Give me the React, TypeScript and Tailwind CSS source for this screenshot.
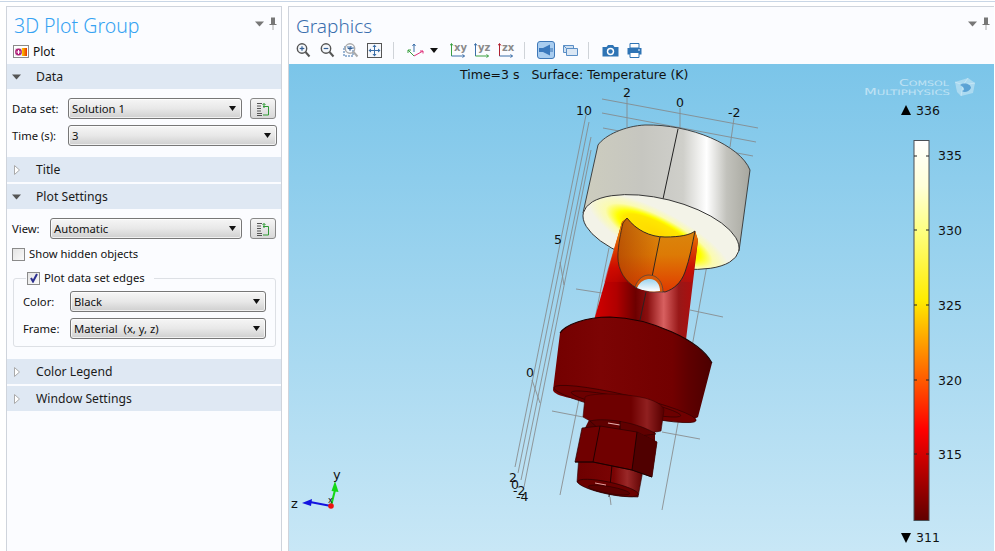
import React from "react";

const font = { fontFamily: '"Noto Sans", "Liberation Sans", sans-serif' };

function Caret({ open }: { open: boolean }) {
  return open ? (
    <svg width="9" height="6" viewBox="0 0 9 6" className="block"><path d="M0 0.5H9L4.5 5.5Z" fill="#555" /></svg>
  ) : (
    <svg width="6" height="10" viewBox="0 0 6 10" className="block"><path d="M0.5 0.5V9.5L5.5 5Z" fill="#fff" stroke="#aaa" /></svg>
  );
}

function Section({ title, open }: { title: string; open: boolean }) {
  return (
    <div className="flex h-[25px] shrink-0 items-center bg-[#dfe8f3] text-[12.2px] text-[#1a1a1a]">
      <div className="flex w-[19px] justify-center">
        <Caret open={open} />
      </div>
      <span className="ml-[10px]">{title}</span>
    </div>
  );
}

function Select({ value, className }: { value: string; className: string }) {
  return (
    <div
      className={`flex h-[21px] items-center justify-between rounded-[3px] border border-[#777] bg-gradient-to-b from-[#f6f6f6] via-[#e8e8e8] to-[#cfcfcf] pl-[3px] pr-[5px] text-[#111] shadow-[inset_0_0_0_1px_rgba(255,255,255,0.7)] whitespace-pre ${className}`}
    >
      <span>{value}</span>
      <svg width="7" height="5" viewBox="0 0 7 5"><path d="M0 0H7L3.5 5Z" fill="#111" /></svg>
    </div>
  );
}

function ListButton() {
  return (
    <div className="flex h-[21px] w-[26px] items-center justify-center rounded-[3px] border border-[#888] bg-gradient-to-b from-[#f6f6f6] to-[#d8d8d8]">
      <svg width="14" height="14" viewBox="0 0 14 14" fill="none">
        <path d="M1 1.5H6M1 4H5M1 6.5H5M1 9H5M1 11.5H6M1 13.5H6" stroke="#555" />
        <path d="M7 4.5H12.5V13H7" stroke="#2f9a35" />
        <path d="M8 6V1.5M6.5 3L8 1.5L9.5 3" stroke="#2f9a35" />
      </svg>
    </div>
  );
}

function Pin() {
  return (
    <div className="mt-[10px] flex items-center gap-[5px]">
      <svg width="9" height="6" viewBox="0 0 9 6"><path d="M0 0.5H9L4.5 5.5Z" fill="#777" /></svg>
      <svg width="8" height="13" viewBox="0 0 8 13">
        <path d="M2 0.5H6V7H7.5V8H0.5V7H2Z" fill="#777" />
        <path d="M4 8V13" stroke="#aaa" />
      </svg>
    </div>
  );
}

function Checkbox({ checked }: { checked: boolean }) {
  return (
    <div className="flex h-[13px] w-[13px] items-center justify-center border border-[#8a8a8a] bg-gradient-to-br from-[#e4e4e4] to-[#fafafa]">
      {checked && (
        <svg width="10" height="10" viewBox="0 0 10 10"><path d="M2 5L4 8.5L8 1" stroke="#2b2f8f" strokeWidth="2" fill="none" /></svg>
      )}
    </div>
  );
}

function Mag({ kind }: { kind: "in" | "out" | "box" }) {
  return (
    <svg width="16" height="16" viewBox="0 0 16 16" fill="none">
      {kind === "box" && <rect x="1" y="5" width="9" height="9" stroke="#3a6ea8" strokeDasharray="2 1" />}
      <circle cx="7" cy="6.5" r="4.7" stroke={kind === "box" ? "#aaa" : "#555"} strokeWidth="1.4" fill={kind === "box" ? "none" : "#f4f7fb"} />
      <path d="M10.5 10L14.5 14.5" stroke={kind === "box" ? "#aaa" : "#555"} strokeWidth="2" />
      <path d="M4.7 6.5H9.3" stroke="#345f95" strokeWidth="1.2" />
      {kind !== "out" && <path d="M7 4.2V8.8" stroke="#345f95" strokeWidth="1.2" />}
    </svg>
  );
}

function Extents() {
  return (
    <svg width="15" height="15" viewBox="0 0 15 15" fill="none">
      <rect x="0.5" y="0.5" width="14" height="14" stroke="#555" fill="#f6f8fc" />
      <path d="M7.5 3V12M3 7.5H12" stroke="#3a6ea8" />
      <path d="M7.5 1.5L5.5 4H9.5ZM7.5 13.5L5.5 11H9.5ZM1.5 7.5L4 5.5V9.5ZM13.5 7.5L11 5.5V9.5Z" fill="#3a6ea8" />
    </svg>
  );
}

function Triad() {
  return (
    <svg width="17" height="15" viewBox="0 0 17 15" fill="none">
      <path d="M7 9V1M5.5 3L7 1L8.5 3" stroke="#3a6ea8" />
      <path d="M7 13L1 7M1 10V7H4" stroke="#3aa040" />
      <path d="M7 13L16 8M13 8H16V10.5" stroke="#e0307a" />
    </svg>
  );
}

function PlaneIcon({ a, v, h }: { a: string; v: string; h: string }) {
  return (
    <span className="relative block h-[15px] w-[16px]">
      <svg width="16" height="15" viewBox="0 0 16 15" fill="none" className="absolute left-0 top-0">
        <path d="M1.5 13V1" stroke={v} />
        <path d="M0 2.5L1.5 0.5L3 2.5" stroke={v} />
        <path d="M1.5 13H14.5" stroke={h} />
        <path d="M12.5 11.5L14.5 13L12.5 14.5" stroke={h} />
      </svg>
      <span className="absolute left-[4px] top-[-2px] text-[10px] font-bold leading-[13px] text-[#8a8a8a]" style={{ fontFamily: '"DejaVu Sans", sans-serif' }}>
        {a}
      </span>
    </span>
  );
}

function Sep() {
  return <div className="h-[17px] w-px bg-[#cfd3d8]" />;
}

function Toolbar() {
  return (
    <div className="flex h-[28px] shrink-0 items-center pl-[7px]">
      <div className="flex w-[24px]"><Mag kind="in" /></div>
      <div className="flex w-[24px]"><Mag kind="out" /></div>
      <div className="flex w-[24px]"><Mag kind="box" /></div>
      <div className="flex w-[26px]"><Extents /></div>
      <Sep />
      <div className="ml-[13px] flex items-center gap-[6px]">
        <Triad />
        <svg width="8" height="5" viewBox="0 0 8 5"><path d="M0 0H8L4 5Z" fill="#111" /></svg>
      </div>
      <div className="ml-[12px] flex gap-[8px]">
        <PlaneIcon a="xy" v="#3aa040" h="#3a6ea8" />
        <PlaneIcon a="yz" v="#3a6ea8" h="#3aa040" />
        <PlaneIcon a="zx" v="#b02030" h="#3a6ea8" />
      </div>
      <div className="ml-[10px]"><Sep /></div>
      <div className="ml-[12px] flex h-[18px] w-[18px] items-center justify-center rounded-[3px] border border-[#3f78b8] bg-[#a9cdf0]">
        <svg width="14" height="12" viewBox="0 0 14 12"><path d="M0 4H4L11 0.5V11.5L4 8H0Z" fill="#3a78bd" /><path d="M11 4H14V8H11Z" fill="#6f9fd2" /></svg>
      </div>
      <div className="ml-[8px]">
        <svg width="15" height="14" viewBox="0 0 15 14" fill="none">
          <path d="M0.5 2.5H10.5V9.5H0.5Z" fill="#cfe0f2" stroke="#5b8fc6" />
          <path d="M3.5 5.5H14.5V12.5H3.5Z" fill="#dbe7f4" stroke="#5b8fc6" />
          <path d="M0.5 2.5L3.5 5.5" stroke="#5b8fc6" />
        </svg>
      </div>
      <div className="ml-[10px]"><Sep /></div>
      <div className="ml-[13px]">
        <svg width="17" height="13" viewBox="0 0 17 13">
          <path d="M0.5 3H4.5L6 1H11L12.5 3H16.5V12.5H0.5Z" fill="#2f74b5" />
          <circle cx="8.5" cy="7.5" r="3.7" fill="#fff" />
          <circle cx="8.5" cy="7.5" r="2.2" fill="#2f74b5" />
        </svg>
      </div>
      <div className="ml-[8px]">
        <svg width="15" height="15" viewBox="0 0 15 15">
          <path d="M3 0.5H12V5H3Z" fill="#fff" stroke="#2f74b5" />
          <path d="M0.5 5H14.5V11.5H0.5Z" fill="#2f74b5" />
          <path d="M3 9.5H12V14.5H3Z" fill="#fff" stroke="#2f74b5" />
          <path d="M11 7H13" stroke="#fff" />
        </svg>
      </div>
    </div>
  );
}

function Plot3D() {
  const grid: [number, number, number, number][] = [
    [602, 99, 758, 128], [602, 113, 756, 142], [603, 128, 753, 156],
    [627, 97, 627, 127], [680, 108, 680, 130], [734, 118, 730, 147],
    [586, 115, 515, 467], [589, 122, 518, 473], [591, 137, 521, 480], [591, 150, 524, 487],
    [576, 289, 602, 293], [609, 248, 560, 495], [707, 265, 662, 510],
    [690, 310, 723, 317], [552, 411, 583, 417], [662, 432, 700, 439],
    [532, 380, 540, 403], [610, 497, 611, 505], [560, 262, 564, 285],
  ];
  return (
    <svg viewBox="289 64 705 487" className="block h-[487px] w-[705px]" style={{ fontFamily: '"DejaVu Sans", sans-serif' }}>
      <defs>
        <linearGradient id="bg" x1="0" y1="0" x2="0" y2="1">
          <stop offset="0" stopColor="#7bc5e9" />
          <stop offset="1" stopColor="#c8e7f6" />
        </linearGradient>
        <linearGradient id="steel" gradientUnits="userSpaceOnUse" x1="583" y1="0" x2="750" y2="0">
          <stop offset="0" stopColor="#cdcdbe" />
          <stop offset="0.35" stopColor="#c6c6c0" />
          <stop offset="0.6" stopColor="#cfcfca" />
          <stop offset="0.74" stopColor="#ffffff" />
          <stop offset="0.86" stopColor="#c2c2bc" />
          <stop offset="1" stopColor="#a7a79f" />
        </linearGradient>
        <radialGradient id="face" gradientUnits="userSpaceOnUse" cx="660" cy="236" r="80" gradientTransform="translate(660 236) rotate(14) scale(1 .3) translate(-660 -236)">
          <stop offset="0" stopColor="#ffd800" />
          <stop offset="0.5" stopColor="#ffe800" />
          <stop offset="0.58" stopColor="#ffff00" />
          <stop offset="0.75" stopColor="#fbfbb0" />
          <stop offset="1" stopColor="#f3f3e8" />
        </radialGradient>
        <linearGradient id="strut" gradientUnits="userSpaceOnUse" x1="596" y1="0" x2="690" y2="0">
          <stop offset="0" stopColor="#d00000" />
          <stop offset="0.22" stopColor="#b00000" />
          <stop offset="0.42" stopColor="#6d0000" />
          <stop offset="0.55" stopColor="#8a1010" />
          <stop offset="0.72" stopColor="#d86060" />
          <stop offset="0.88" stopColor="#981818" />
          <stop offset="1" stopColor="#a81010" />
        </linearGradient>
        <linearGradient id="strutFade" gradientUnits="userSpaceOnUse" x1="0" y1="235" x2="0" y2="290">
          <stop offset="0" stopColor="#e87800" />
          <stop offset="0.6" stopColor="#d81000" stopOpacity="0.7" />
          <stop offset="1" stopColor="#d81000" stopOpacity="0" />
        </linearGradient>
        <linearGradient id="channel" x1="0" y1="0" x2="0" y2="1">
          <stop offset="0" stopColor="#d98c10" />
          <stop offset="0.5" stopColor="#dd7a05" />
          <stop offset="1" stopColor="#e03a00" />
        </linearGradient>
        <linearGradient id="channelShade" gradientUnits="userSpaceOnUse" x1="618" y1="0" x2="660" y2="0">
          <stop offset="0" stopColor="#a03000" stopOpacity="0.55" />
          <stop offset="1" stopColor="#a03000" stopOpacity="0" />
        </linearGradient>
        <linearGradient id="base" gradientUnits="userSpaceOnUse" x1="553" y1="0" x2="712" y2="0">
          <stop offset="0" stopColor="#740000" />
          <stop offset="0.3" stopColor="#7c0404" />
          <stop offset="0.75" stopColor="#720000" />
          <stop offset="0.85" stopColor="#5f0000" />
          <stop offset="1" stopColor="#4c0000" />
        </linearGradient>
        <linearGradient id="neck" gradientUnits="userSpaceOnUse" x1="583" y1="0" x2="663" y2="0">
          <stop offset="0" stopColor="#6e0000" />
          <stop offset="0.6" stopColor="#6e0000" />
          <stop offset="0.8" stopColor="#902020" />
          <stop offset="1" stopColor="#5a0000" />
        </linearGradient>
        <linearGradient id="tail" gradientUnits="userSpaceOnUse" x1="577" y1="0" x2="644" y2="0">
          <stop offset="0" stopColor="#6e0000" />
          <stop offset="0.55" stopColor="#7a0404" />
          <stop offset="0.75" stopColor="#9a2828" />
          <stop offset="1" stopColor="#5a0000" />
        </linearGradient>
        <linearGradient id="hole" x1="0" y1="0" x2="0" y2="1">
          <stop offset="0" stopColor="#9bd3ee" />
          <stop offset="1" stopColor="#ffffff" />
        </linearGradient>
        <linearGradient id="scale" x1="0" y1="0" x2="0" y2="1">
          <stop offset="0" stopColor="#ffffff" />
          <stop offset="0.12" stopColor="#ffffd8" />
          <stop offset="0.24" stopColor="#ffff80" />
          <stop offset="0.42" stopColor="#ffec00" />
          <stop offset="0.6" stopColor="#ff7000" />
          <stop offset="0.76" stopColor="#ff0000" />
          <stop offset="0.88" stopColor="#b00000" />
          <stop offset="1" stopColor="#600000" />
        </linearGradient>
      </defs>

      <rect x="289" y="64" width="705" height="487" fill="url(#bg)" />

      <text x="460" y="79" fontSize="12.5" fill="#111" xmlSpace="preserve" style={{ whiteSpace: "pre" }}>{"Time=3 s   Surface: Temperature (K)"}</text>

      {/* logo */}
      <g fill="#fff" opacity="0.5">
        <text x="899" y="86" fontSize="7.5" textLength="50" lengthAdjust="spacingAndGlyphs"><tspan fontSize="9.5">C</tspan>OMSOL</text>
        <text x="864" y="95" fontSize="7.5" textLength="86" lengthAdjust="spacingAndGlyphs"><tspan fontSize="9.5">M</tspan>ULTIPHYSICS</text>
      </g>
      <path d="M955 82L968 78L975 83L973 93L961 96L957 92Z" fill="#fff" opacity="0.35" />
      <path d="M955 82L963 85L968 78M963 85L961 96M963 85L975 83" stroke="#fff" strokeWidth="0.6" fill="none" opacity="0.5" />
      <path d="M960 85C964 82 971 84 971 88C969 92 964 93 962 91C966 90 964 87 960 85Z" fill="#3f8fcb" opacity="0.75" />

      {/* grid */}
      <g stroke="#868686" strokeWidth="0.9" opacity="0.9">
        {grid.map((l, i) => (
          <line key={i} x1={l[0]} y1={l[1]} x2={l[2]} y2={l[3]} />
        ))}
      </g>
      <g fontSize="12.5" fill="#111">
        <text x="623" y="97">2</text>
        <text x="676" y="107">0</text>
        <text x="728" y="117">-2</text>
        <text x="576" y="115">10</text>
        <text x="554" y="244">5</text>
        <text x="526" y="377">0</text>
        <text x="509" y="482">2</text>
        <text x="511" y="489">0</text>
        <text x="513" y="495">-2</text>
        <text x="516" y="501">-4</text>
      </g>

      {/* upper cylinder */}
      <path d="M583 213L598 145C605 135 625 126 645 125C690 124 740 145 750 170L739 251Z" fill="url(#steel)" stroke="#333" strokeWidth="0.9" />
      <path d="M678 129L663 199" stroke="#222" strokeWidth="1" />
      <ellipse cx="661" cy="232" rx="80" ry="33" transform="rotate(14 661 232)" fill="url(#face)" stroke="#333" strokeWidth="0.9" />

      {/* strut over face */}
      <path d="M627 218L622 222L595 317L590 340L686 340L698 240L695 231C688 236 680 237 665 237C650 237 636 230 627 218Z" fill="url(#strut)" />
      <path d="M627 218L622 222L604 282L692 282L698 240L695 231C688 236 680 237 665 237C650 237 636 230 627 218Z" fill="url(#strutFade)" />
      <path d="M627 218C636 230 650 237 665 237C680 237 690 235 695 231C692 245 690 258 685 272C681 283 674 289 665 292L637 288C625 282 618 270 618 257C618 245 621 232 623 223Z" fill="url(#channel)" stroke="#222" strokeWidth="0.9" />
      <path d="M627 218C636 230 650 237 660 237L652 277L637 288C625 282 618 270 618 257C618 245 621 232 623 223Z" fill="url(#channelShade)" />
      <path d="M660 237L652 277" stroke="#222" strokeWidth="0.9" />
      <path d="M635 287C638 278 644 275 649 275C658 275 663 283 663 292L650 292Z" fill="#d85a08" stroke="#444" strokeWidth="0.7" />
      <path d="M637 288C640 281 645 279 650 279C656 279 660 284 660 291C652 292 644 291 637 288Z" fill="url(#hole)" />
      <path d="M646 292L640 320" stroke="#222" strokeWidth="0.9" />

      {/* base */}
      <path d="M560 333C565 325 585 317 610 317C650 318 700 340 712 363L698 417C695 420 670 420 650 416L570 398C560 396 553 393 553 390Z" fill="url(#base)" />
      <path d="M560 333C565 325 585 317 610 317C650 318 700 340 712 363" fill="none" stroke="#1c0000" strokeWidth="1.1" />
      <ellipse cx="625" cy="404" rx="73" ry="9" transform="rotate(13 625 404)" fill="#700000" stroke="#3c0000" strokeWidth="0.8" />
      <ellipse cx="626" cy="404" rx="56" ry="6" transform="rotate(12 626 404)" fill="#6c0000" stroke="#3c0000" strokeWidth="0.8" />

      {/* neck */}
      <path d="M590 418L585 428L655 442L655 432Z" fill="#5a0000" />
      <path d="M585 397C590 393 620 393 640 397C655 400 663 405 664 410L661 431C640 436 600 428 583 417Z" fill="url(#neck)" stroke="#3c0000" strokeWidth="0.6" />
      <path d="M590 421C605 417 640 423 656 434L630 437L600 430Z" fill="#600000" stroke="#2a0000" strokeWidth="0.6" />
      <path d="M608 423L620 425" stroke="#e8b0b0" strokeWidth="1.2" />
      <path d="M620 421L620 430" stroke="#220000" strokeWidth="0.8" />

      {/* tail */}
      <path d="M579 455L577 482C590 492 620 497 638 497L644 465Z" fill="url(#tail)" stroke="#2a0000" strokeWidth="0.6" />
      <path d="M612 465L609 497" stroke="#1c0000" strokeWidth="0.9" />
      <ellipse cx="608" cy="488" rx="31" ry="6" transform="rotate(12 608 488)" fill="#6a0000" stroke="#2a0000" strokeWidth="0.7" />
      <ellipse cx="609" cy="490" rx="21" ry="3.5" transform="rotate(10 609 490)" fill="#5a0000" stroke="#2a0000" strokeWidth="0.6" />
      <path d="M595 483L606 485" stroke="#e8a0a0" strokeWidth="1" />

      {/* nut */}
      <path d="M582 428L600 426L637 432L657 442L652 477L632 470L593 462L575 462Z" fill="#700000" stroke="#2a0000" strokeWidth="0.7" />
      <path d="M637 432L657 442L652 477L632 470Z" fill="#500000" />
      <path d="M600 426L593 462M637 432L632 470" stroke="#1c0000" strokeWidth="0.9" />
      <path d="M575 462L593 462L632 470L652 477" fill="none" stroke="#1c0000" strokeWidth="1" />

      {/* triad */}
      <path d="M331 506L335 490" stroke="#14d814" strokeWidth="2" />
      <path d="M335 481L331.5 491L338.5 492Z" fill="#14d814" />
      <path d="M331 506L310 502" stroke="#1414e0" strokeWidth="2" />
      <path d="M302 503L312 499L311 506Z" fill="#1414e0" />
      <circle cx="331" cy="506" r="2.8" fill="#ee1111" />
      <text x="333" y="479" fontSize="13" fill="#111">y</text>
      <text x="291" y="508" fontSize="13" fill="#111">z</text>
      <text x="328" y="503" fontSize="8" fill="#111">x</text>

      {/* colour scale */}
      <rect x="914" y="140.5" width="15" height="380" fill="url(#scale)" stroke="#4a4f55" />
      <g stroke="#222">
        {[156, 230, 305, 380, 454].map((y) => (
          <g key={y}>
            <line x1="914" y1={y} x2="917" y2={y} />
            <line x1="926" y1={y} x2="929" y2={y} />
          </g>
        ))}
      </g>
      <g fontSize="12.5" fill="#111">
        <text x="938" y="160">335</text>
        <text x="938" y="235">330</text>
        <text x="938" y="310">325</text>
        <text x="938" y="385">320</text>
        <text x="938" y="459">315</text>
        <text x="916" y="115">336</text>
        <text x="916" y="542">311</text>
      </g>
      <path d="M901 115L906 105L911 115Z" fill="#000" />
      <path d="M901 533L911 533L906 543Z" fill="#000" />
    </svg>
  );
}

export default function App() {
  return (
    <div className="flex h-[551px] w-[995px] flex-col overflow-hidden bg-white text-[12px] leading-[16px]" style={font}>
      <div className="h-[2px] shrink-0 border-b border-[#c8d6e6]" />
      <div className="flex min-h-0 flex-1 pt-[4px]">
        {/* left panel */}
        <div className="ml-[6px] flex w-[276px] shrink-0 flex-col border border-b-0 border-[#cfd4dc] bg-[#fbfcff]">
          <div className="flex h-[32px] shrink-0 items-start justify-between pl-[7px] pr-[4px]">
            <span className="mt-[5px] text-[19.5px] font-light leading-[28px] text-[#35a2f2]">3D Plot Group</span>
            <Pin />
          </div>
          <div className="flex h-[25px] shrink-0 items-center gap-[4px] pl-[6px] text-[#111]">
            <svg width="16" height="13" viewBox="0 0 16 13">
              <rect x="0.5" y="0.5" width="15" height="12" fill="#fff" stroke="#8a8a8a" />
              <rect x="2" y="3" width="12" height="8" fill="#e9e9e9" />
              <defs><linearGradient id="ic" x1="0" y1="0" x2="1" y2="0"><stop offset="0" stopColor="#ffd000" /><stop offset="1" stopColor="#e83000" /></linearGradient></defs>
              <rect x="9" y="3" width="5" height="8" fill="url(#ic)" />
              <circle cx="5.5" cy="7" r="3.4" fill="#b0207a" />
              <path d="M3.5 7H7.5M5.5 5V9" stroke="#fff" />
            </svg>
            <span>Plot</span>
          </div>

          <Section title="Data" open />
          <div className="flex flex-col gap-[6px] pb-[11px] pl-[5px] pr-[4px] pt-[9px] text-[11.25px]">
            <div className="flex items-center text-[#111]">
              <span className="w-[56px] shrink-0">Data set:</span>
              <Select value="Solution 1" className="w-[174px]" />
              <div className="ml-[8px]"><ListButton /></div>
            </div>
            <div className="flex items-center text-[#111]">
              <span className="w-[56px] shrink-0">Time (s):</span>
              <Select value="3" className="flex-1" />
            </div>
          </div>

          <Section title="Title" open={false} />
          <div className="h-[2px] shrink-0" />
          <Section title="Plot Settings" open />
          <div className="flex flex-col pl-[5px] pr-[4px] pt-[9px] text-[11.25px]">
            <div className="flex items-center text-[#111]">
              <span className="w-[38px] shrink-0">View:</span>
              <Select value="Automatic" className="w-[192px]" />
              <div className="ml-[8px]"><ListButton /></div>
            </div>
            <div className="mt-[7px] flex h-[16px] items-center gap-[4px] text-[#111]">
              <Checkbox checked={false} />
              <span>Show hidden objects</span>
            </div>
            <div className="relative ml-px mr-px mt-[16px] flex flex-col gap-[6px] rounded-[3px] border border-[#dde0e5] pb-[7px] pl-[9px] pr-[9px] pt-[12px] text-[#111]">
              <div className="absolute left-[12px] top-[-9px] flex h-[16px] items-center gap-[4px] bg-[#fbfcff] px-px pr-[9px]">
                <Checkbox checked />
                <span>Plot data set edges</span>
              </div>
              <div className="flex items-center">
                <span className="w-[47px] shrink-0">Color:</span>
                <Select value="Black" className="flex-1" />
              </div>
              <div className="flex items-center">
                <span className="w-[47px] shrink-0">Frame:</span>
                <Select value="Material  (x, y, z)" className="flex-1" />
              </div>
            </div>
          </div>

          <div className="h-[12px] shrink-0" />
          <Section title="Color Legend" open={false} />
          <div className="h-[2px] shrink-0" />
          <Section title="Window Settings" open={false} />
        </div>

        {/* graphics panel */}
        <div className="ml-[6px] flex w-[706px] shrink-0 flex-col border-l border-t border-[#cfd4dc] bg-[#fbfcff]">
          <div className="flex h-[29px] shrink-0 items-start justify-between pl-[7px] pr-[4px]">
            <span className="mt-[5px] text-[19px] font-light leading-[28px] text-[#3b6fae]">Graphics</span>
            <Pin />
          </div>
          <div className="-ml-px"><Toolbar /></div>
          <Plot3D />
        </div>
      </div>
    </div>
  );
}
